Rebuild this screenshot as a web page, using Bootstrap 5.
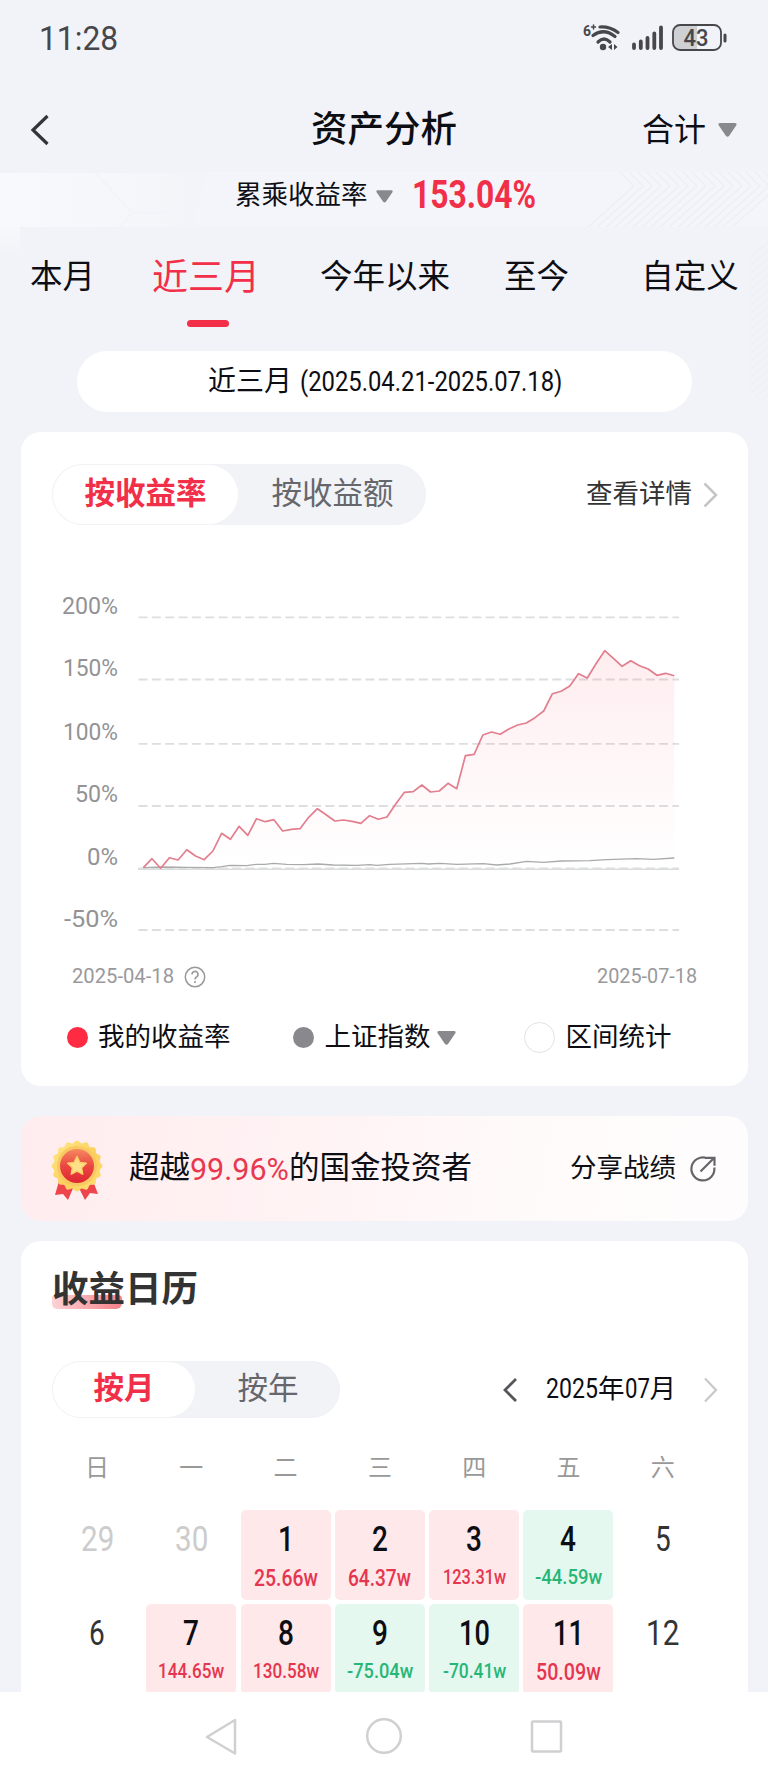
<!DOCTYPE html>
<html lang="zh-CN">
<head>
<meta charset="utf-8">
<meta name="viewport" content="width=device-width, initial-scale=1">
<title>资产分析</title>
<link href="https://cdn.jsdelivr.net/npm/bootstrap@5.3.0/dist/css/bootstrap.min.css" rel="stylesheet">
<style>
:root{--ink:#0d0e14;--rd:#f22f48;--page:#f2f3f8}
body{background:var(--page);color:var(--ink);font-family:Roboto,"Noto Sans CJK SC",sans-serif;line-height:1;width:768px;height:1781px;overflow:hidden;white-space:nowrap}
svg{display:block;flex:none}
main{position:relative;z-index:0}
.backdrop{position:absolute;left:0;top:0;z-index:-1}
.fit{display:inline-block;transform-origin:0 50%;white-space:nowrap}
.statusbar{height:76px;padding:0 41px 0 39px;color:#47474b}
.clock{font-size:33px}
.topbar{height:96px;padding:11px 30px 0 30px;display:grid;grid-template-columns:1fr auto 1fr}
.topbar h1{font-size:36.5px;font-weight:500;line-height:1;padding-top:1px}
.t32{font-size:32px}.t26{font-size:26.5px}.t30{font-size:30.5px}
.rate{height:47px;padding-left:235px}
.rate-num{font-size:38.5px;font-weight:700;color:var(--rd)}
.tabs{display:grid;grid-template-columns:125px 162px 196px 107px 178px;height:132px;padding-bottom:15px}
.tabs>*{display:flex;align-items:center;justify-content:center;position:relative;font-size:32.5px}
.tabs .on{color:var(--rd);font-size:36px}
.tabs .on::after{content:"";position:absolute;top:101px;left:62px;width:42px;height:7px;border-radius:4px;background:var(--rd)}
.tabs>:last-child{padding-left:22px}
.range{width:615px;height:61px;margin:0 0 20px 77px;border-radius:31px;background:#fff;padding-left:131px}
.panel{width:727px;margin-left:21px;border-radius:20px;background:#fff}
.chartcard{height:654px;margin-bottom:30px;padding-top:32px}
.seg{border-radius:31px;background:#f2f3f7;border:1px solid #f1f2f5;margin-left:31px}
.seg>*{display:flex;align-items:center;justify-content:center;border-radius:30px;color:#66676c;font-size:30.5px;height:100%}
.seg .on{background:#fff;color:var(--rd);font-weight:700}
.dates{height:34px;color:#99999c;font-size:21px;padding:0 51px 0 51px}
.legend{height:60px;padding-left:46px;margin-top:14px}
.dot{width:21px;height:21px;border-radius:50%}
.ring{width:31px;height:31px;border-radius:50%;border:1px solid #e2e2e4}
.banner{height:105px;margin-bottom:20px;background:linear-gradient(100deg,#ffecee 0,#fff3f4 40%,#fffafa 68%,#fefdfd 100%);padding-left:27px}
.calcard{height:451px;border-radius:20px 20px 0 0;overflow:hidden;padding-top:24px}
.caltitle{font-size:36.5px;font-weight:700;color:#333;margin-left:31px;height:46px;width:147px;position:relative;z-index:0;line-height:50px}
.caltitle::before{content:"";position:absolute;z-index:-1;left:0;top:30px;width:70px;height:14px;border-radius:3px 4px 6px 5px;background:linear-gradient(90deg,#fcd3d6,#f58088)}
.cal{display:grid;grid-template-columns:repeat(7,90px);column-gap:4.3px;row-gap:4.5px;margin:12px 0 0 31px}
.wk{height:75px;color:#999;font-size:24px;display:flex;justify-content:center;align-items:center}
.day{height:90px;border-radius:5px;display:flex;flex-direction:column;align-items:center;font-size:35px;color:#333;padding-top:12px}
.day b,.day i{font-style:normal;font-weight:500;display:block}
.day i{font-size:22px;margin-top:10px}
.day.up,.day.down{color:var(--ink)}
.up{background:#fee8ea}.down{background:#e4f8ef}
.up i{color:#e5364f}.down i{color:#27b676}
.off{color:#ccc!important}
.sysnav{height:89px;background:#fff;padding:25px 0 0 205px;display:flex;position:relative}
</style>
</head>
<body>
<header>
  <div class="statusbar d-flex align-items-center justify-content-between">
    <span class="fit clock" data-w="79">11:28</span>
    <svg width="146" height="34" viewBox="581 20 146 34" fill="none" stroke="#47474b" stroke-linecap="round">
      <text x="583" y="35" font-size="14" font-weight="700" fill="#47474b" stroke="none" textLength="8" lengthAdjust="spacingAndGlyphs">6</text>
      <path d="M591.500 26h4M593.500 24v4" stroke-width="1.500"/>
      <path d="M600 26q10-.500 18 5.500M593 34.500q11-8 22 1M598 41q6-6 12 0" stroke-width="3.200"/>
      <circle cx="603" cy="46" r="3.200" fill="#47474b" stroke="none"/>
      <path d="M608 46l4-3v6zM617.500 46l-3.500-3v6z" fill="#47474b" stroke="none"/>
      <path d="M634 43.500v3.500M640.800 40.500v6.500M647.500 37v10M654.300 32.500v14.500M661 26.500v20.500" stroke-width="3.800"/>
      <path d="M697 24h-17a7 7 0 0 0-7 7v11a7 7 0 0 0 7 7h17z" fill="#cfd0d4" stroke="none"/>
      <rect x="673" y="24" width="48" height="25" rx="7" stroke-width="1.800"/>
      <path d="M725 34v6" stroke-width="3"/>
      <text x="683.500" y="45" font-size="23" font-weight="500" fill="#47474b" stroke="none" textLength="25" lengthAdjust="spacingAndGlyphs">43</text>
    </svg>
  </div>
  <nav class="topbar align-items-center">
    <svg width="20" height="32" viewBox="0 0 20 32" fill="none" stroke="#333338" stroke-width="3.200"><path d="M17.500 2 3 16 17.500 30"/></svg>
    <h1 class="m-0">资产分析</h1>
    <div class="d-flex align-items-center justify-content-end"><span class="t32">合计</span>
      <svg class="ms-2" width="24" height="16" viewBox="-4 0 24 16" fill="#88898d"><path d="M2 1h15q2 0 1.500 2l-7.500 11q-1.500 1.500-3 0L.500 3Q0 1 2 1z"/></svg></div>
  </nav>
</header>
<main>
  <svg class="backdrop" width="768" height="230" viewBox="0 172 768 230" fill="none" aria-hidden="true">
    <defs>
      <linearGradient id="haze" x1="0" x2="1"><stop stop-color="#f8f9fc"/><stop offset=".5" stop-color="#f6f7fb"/><stop offset="1" stop-color="#f3f4f9"/></linearGradient>
      <linearGradient id="down" x1="0" y1="0" x2="0" y2="1"><stop stop-color="#f7f8fb"/><stop offset="1" stop-color="#f2f3f8"/></linearGradient>
      <clipPath id="band"><path d="M560 172h208v55H560z"/></clipPath>
      <clipPath id="edge"><path d="M750 227h18v170h-18z"/></clipPath>
    </defs>
    <path d="M0 173H208L193 227H0z" fill="url(#haze)"/>
    <path d="M0 227h20v28H0z" fill="url(#down)"/>
    <path d="M96 173l36 40-12 14M133 213h60" stroke="#f3f4f9" stroke-width="2"/>
    <path d="M208 172h560v55H193z" fill="#f4f5fa"/>
    <g id="chev" stroke="#eceef3" stroke-width="1.200" clip-path="url(#band)"></g>
    <g id="edgelines" stroke="#edeff4" stroke-width="1.200" clip-path="url(#edge)"></g>
  </svg>
  <div class="rate d-flex align-items-center">
    <span class="t26">累乘收益率</span>
    <svg style="margin:0 19px 0 8px" width="17" height="14" viewBox="0 0 19 15" fill="#88898d"><path d="M2 1h15q2 0 1.500 2l-7.500 11q-1.500 1.500-3 0L.500 3Q0 1 2 1z"/></svg>
    <span class="fit rate-num" data-w="124">153.04%</span>
  </div>
  <div class="tabs"><span>本月</span><span class="on">近三月</span><span>今年以来</span><span>至今</span><span>自定义</span></div>
  <div class="range d-flex align-items-center"><span style="font-size:28px;margin-right:8px">近三月</span><span class="fit" style="font-size:28px" data-w="262">(2025.04.21-2025.07.18)</span></div>

  <section class="panel chartcard">
    <div class="d-flex align-items-center">
      <div class="seg d-flex" style="width:374px;height:61px"><span class="on" style="width:185px">按收益率</span><span style="width:187px;padding-left:2px">按收益额</span></div>
      <span class="t26" style="margin-left:160px;color:#333">查看详情</span>
      <svg style="margin-left:11px" width="16" height="26" viewBox="0 0 16 26" fill="none" stroke="#c5c5c8" stroke-width="2.500"><path d="M1.500 1.500 13 13 1.500 24.500"/></svg>
    </div>
    <svg id="chart" width="727" height="434" viewBox="21 525 727 434" font-size="23" fill="#939396">
      <defs><linearGradient id="fade" x1="0" y1="650" x2="0" y2="868" gradientUnits="userSpaceOnUse"><stop stop-color="#f9384e" stop-opacity=".09"/><stop offset=".45" stop-color="#f9384e" stop-opacity=".05"/><stop offset="1" stop-color="#f9384e" stop-opacity="0"/></linearGradient></defs>
    </svg>
    <div class="dates d-flex align-items-center">
      <span class="fit" data-w="102">2025-04-18</span>
      <svg class="ms-2 me-auto" style="padding-left:1px" width="24" height="23" viewBox="0 0 23 23" fill="none" stroke="#99999c" stroke-width="1.500"><circle cx="12" cy="12" r="9.700"/><path d="M9 9.500a3 3 0 1 1 4.500 2.500q-1.500.800-1.500 2.500M12 16v2"/></svg>
      <span class="fit" data-w="100">2025-07-18</span>
    </div>
    <div class="legend d-flex align-items-center t26">
      <span class="dot" style="background:#ff2b43;margin-right:10px"></span><span>我的收益率</span>
      <span class="dot" style="background:#88888d;margin:0 11px 0 62px"></span><span>上证指数</span>
      <svg style="margin-left:6px" width="19" height="15" viewBox="0 0 19 15" fill="#88888d"><path d="M2 1h15q2 0 1.500 2l-7.500 11q-1.500 1.500-3 0L.500 3Q0 1 2 1z"/></svg>
      <span class="ring" style="margin:0 11px 0 68px"></span><span>区间统计</span>
    </div>
  </section>

  <section class="panel banner d-flex align-items-center">
    <svg width="56" height="64" viewBox="0 0 56 64">
      <defs><linearGradient id="gold" x1="0" y1="0" x2="1" y2="1"><stop stop-color="#ffe98a"/><stop offset=".55" stop-color="#fbcf5d"/><stop offset="1" stop-color="#ffe27a"/></linearGradient><linearGradient id="disc" x1="0" y1="0" x2="0" y2="1"><stop stop-color="#f58a60"/><stop offset=".5" stop-color="#ea4643"/><stop offset="1" stop-color="#df2631"/></linearGradient></defs>
      <path d="M11 44 7 58l8-1 5 6 6-14zM45 44l5 13-8-1-5 7-7-14z" fill="#ee444c"/>
      <path id="medal" fill="url(#gold)"/>
      <circle cx="29" cy="29" r="20" fill="#f9c860"/><circle cx="29" cy="29" r="17" fill="url(#disc)"/>
      <path d="M29 19.500l2.800 5.900 6.500.900-4.700 4.500 1.100 6.400-5.700-3.100-5.700 3.100 1.100-6.400-4.700-4.500 6.500-.900z" fill="#ffe08a" stroke="#ffd067" stroke-width="1.500" stroke-linejoin="round"/>
    </svg>
    <span style="margin-left:25px" class="t30">超越</span><span class="fit" style="font-size:32px;color:#e8384f" data-w="99">99.96%</span><span class="t30">的国金投资者</span>
    <span class="t26" style="margin-left:98px">分享战绩</span>
    <svg style="margin-left:13px" width="28" height="28" viewBox="0 0 28 28" fill="none" stroke="#66666a" stroke-width="2.200"><path d="M18 3.200A11.500 11.500 0 1 0 25.300 12.500M11.500 16.500 24.500 3.500M17.500 2.800h8v8"/></svg>
  </section>

  <section class="panel calcard">
    <div class="caltitle">收益日历</div>
    <div class="d-flex align-items-center" style="margin-top:50px">
      <div class="seg d-flex" style="width:288px;height:57px"><span class="on" style="width:142px">按月</span><span style="width:144px;padding-left:2px">按年</span></div>
      <svg style="margin-left:161px" width="18" height="26" viewBox="0 0 18 26" fill="none" stroke="#55555a" stroke-width="2.800"><path d="M15 2 4 13l11 11"/></svg>
      <div class="t26" style="margin-left:27px;width:128px;margin-top:-2px"><span class="fit" data-w="52" style="font-size:27.500px">2025</span>年<span class="fit" data-w="25" style="font-size:27.500px">07</span>月</div>
      <svg style="margin-left:29px" width="16" height="26" viewBox="0 0 16 26" fill="none" stroke="#c9c9cc" stroke-width="2.300"><path d="M2 1.500 13 13 2 24.500"/></svg>
    </div>
    <div class="cal" id="cal">
      <span class="wk">日</span><span class="wk">一</span><span class="wk">二</span><span class="wk">三</span><span class="wk">四</span><span class="wk">五</span><span class="wk">六</span>
    </div>
  </section>
</main>
<footer class="sysnav">
  <svg width="360" height="40" viewBox="205 1717 360 40" fill="none" stroke="#d0d0d2" stroke-width="2.500" stroke-linejoin="round"><path d="M235 1720v33.500L207 1737z"/><circle cx="384" cy="1736" r="16.800"/><rect x="532" y="1721.500" width="29" height="30" rx="1"/></svg>
</footer>
<script src="https://cdn.jsdelivr.net/npm/bootstrap@5.3.0/dist/js/bootstrap.bundle.min.js"></script>
<script>
// Calendar days: [number, state, amount, amount width]
const days=[[29,'off'],[30,'off'],[1,'up','25.66w',64],[2,'up','64.37w',63],[3,'up','123.31w',63],[4,'down','-44.59w',67],[5,''],
[6,''],[7,'up','144.65w',66],[8,'up','130.58w',66],[9,'down','-75.04w',66],[10,'down','-70.41w',63],[11,'up','50.09w',65],[12,'']];
const cal=document.getElementById('cal');
days.forEach(([n,c,v,w])=>{
  const big=v&&v.length===6?23:21;
  cal.insertAdjacentHTML('beforeend',`<div class="day ${c}"><b class="fit" style="font-weight:${v?500:400}" data-w="${n>9?(v?31:33):16}">${n}</b>${v?`<i class="fit" style="font-size:${big}px" data-w="${w}">${v}</i>`:''}</div>`);
});
// Chart: grid, axis labels and both series
const grid=[[617.3,613.8,'200%',56],[679.5,676,'150%',55],[743.8,739.5,'100%',55],[806,801.5,'50%',43],[868.3,864.8,'0%',31],[930,926.5,'-50%',54]];
let s='<path d="M138 869.300H679" stroke="#d7dcde" stroke-width="1.500"/>';
grid.forEach(([y,b,t,w])=>{s+=`<path d="M138.500 ${y}H679" stroke="#dedee0" stroke-width="1.800" stroke-dasharray="9 4.350"/><text x="${118-w}" y="${b}" textLength="${w}" lengthAdjust="spacingAndGlyphs">${t}</text>`});
const mine=[893,866,895,863,870,839,858,869,843,790,808,769,796,746,755,749,783,778,776,742,716,734,753,750,754,760,737,748,741,702,667,665,645,666,663,640,656,557,553,495,486,493,477,465,459,443,423,371,364,348,311,324,281,242,265,289,272,287,297,316,310,317];
const pts=mine.map((v,i)=>(143.3+i*8.705).toFixed(1)+','+(570+v/3).toFixed(1)).join(' ');
const index=[[310,893],[370,891],[440,892],[520,893],[545,890],[570,886],[620,887],[650,883],[675,883],[700,880],[740,883],[790,884],[835,882],[880,885],[950,886],[990,884],[1010,886],[1050,883],[1145,880],[1165,882],[1200,880],[1250,883],[1330,881],[1370,885],[1410,882],[1460,874],[1510,877],[1565,873],[1650,872],[1700,869],[1790,866],[1840,868],[1903,864]];
s+=`<polygon points="143.3,868 ${pts} 674.3,868" fill="url(#fade)"/>`;
s+=`<polyline points="${index.map(p=>(40+p[0]/3).toFixed(1)+','+(570+p[1]/3).toFixed(1)).join(' ')}" fill="none" stroke="#aaaaab" stroke-width="1.300"/>`;
s+=`<polyline points="${pts}" fill="none" stroke="#e27e8e" stroke-width="1.700" stroke-linejoin="round"/>`;
document.getElementById('chart').insertAdjacentHTML('beforeend',s);
// Scalloped medal rim
let m='';for(let i=0;i<96;i++){const a=i/96*2*Math.PI,r=24.3+1.3*Math.cos(a*16);m+=(i?'L':'M')+(29+r*Math.sin(a)).toFixed(1)+' '+(29-r*Math.cos(a)).toFixed(1)}
document.getElementById('medal').setAttribute('d',m+'z');
// Faint chevron texture behind the header
let ch='',ed='';
for(let i=0;i<17;i++){const x=620+i*9;ch+=`<path d="M${x} 172l14 14-47 42"/>`}
for(let i=0;i<20;i++){ed+=`<path d="M745 ${262+i*8}l28-24"/>`}
document.getElementById('chev').innerHTML=ch;document.getElementById('edgelines').innerHTML=ed;
// Condense figures to the width of the narrow numeral face
document.querySelectorAll('.fit').forEach(e=>{const w=+e.dataset.w,n=e.offsetWidth;e.style.width=w+'px';e.style.transform=`scaleX(${w/n})`});
</script>
</body>
</html>
